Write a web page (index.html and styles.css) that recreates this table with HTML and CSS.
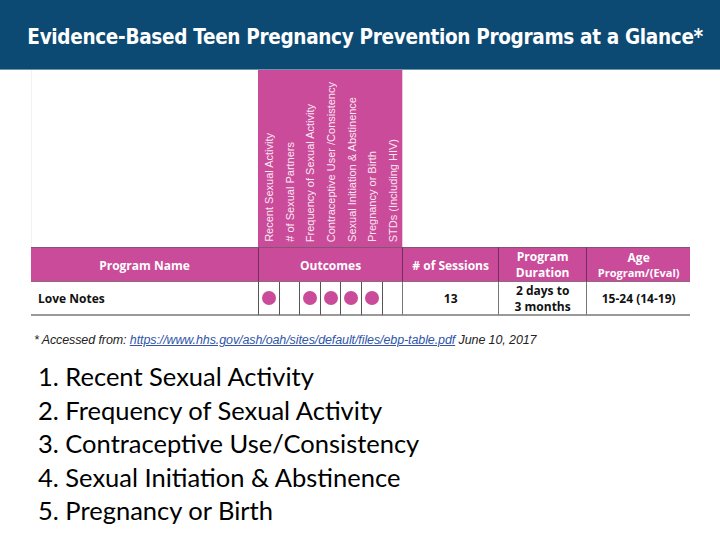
FILE: index.html
```html
<!DOCTYPE html>
<html lang="en">
<head>
<meta charset="utf-8">
<title>Evidence-Based Teen Pregnancy Prevention Programs at a Glance</title>
<link rel="stylesheet" href="styles.css">
</head>
<body>
<header class="banner">
  <h1 class="title">Evidence-Based Teen Pregnancy Prevention Programs at a Glance*</h1>
</header>
<main class="content">
  <div class="ebp">
    <div class="blank-left"></div>
    <div class="vlab"><span>Recent Sexual Activity</span></div>
    <div class="vlab"><span># of Sexual Partners</span></div>
    <div class="vlab"><span>Frequency of Sexual Activity</span></div>
    <div class="vlab"><span>Contraceptive User /Consistency</span></div>
    <div class="vlab"><span>Sexual Initiation &amp; Abstinence</span></div>
    <div class="vlab"><span>Pregnancy or Birth</span></div>
    <div class="vlab"><span>STDs (Including HIV)</span></div>
    <div class="blank-right"></div>

    <div class="th th-first">Program Name</div>
    <div class="th th-outcomes">Outcomes</div>
    <div class="th"># of Sessions</div>
    <div class="th th-two">Program<br>Duration</div>
    <div class="th th-two th-age"><span>Age</span><small>Program/(Eval)</small></div>

    <div class="td td-first">Love Notes</div>
    <div class="td dot"><i></i></div>
    <div class="td dot"></div>
    <div class="td dot"><i></i></div>
    <div class="td dot"><i></i></div>
    <div class="td dot"><i></i></div>
    <div class="td dot"><i></i></div>
    <div class="td dot"></div>
    <div class="td td-c">13</div>
    <div class="td td-c td-two">2 days to<br>3 months</div>
    <div class="td td-c">15-24 (14-19)</div>
  </div>

  <p class="note">* Accessed from: <a href="#">https://www.hhs.gov/ash/oah/sites/default/files/ebp-table.pdf</a> June 10, 2017</p>

  <ol class="list">
    <li>Recent Sexual Activity</li>
    <li>Frequency of Sexual Activity</li>
    <li>Contraceptive Use/Consistency</li>
    <li>Sexual Initiation &amp; Abstinence</li>
    <li>Pregnancy or Birth</li>
  </ol>
</main>
</body>
</html>
```
FILE: styles.css
```css
html, body {
  margin: 0;
  padding: 0;
  background: #ffffff;
}
body {
  width: 720px;
  height: 540px;
  overflow: hidden;
  font-family: "Open Sans", "Liberation Sans", sans-serif;
  color: #111;
}
.banner {
  height: 70px;
  background: #0c4a74;
  border-bottom: 1px solid #6d93ad;
  box-sizing: border-box;
  display: flex;
  align-items: center;
  justify-content: center;
  overflow: hidden;
}
.title {
  flex: none;
  margin: 4px 0 0 10px;
  color: #ffffff;
  font-family: "DejaVu Sans", sans-serif;
  font-weight: 700;
  font-size: 22px;
  letter-spacing: -0.4px;
  white-space: nowrap;
  transform: scaleX(0.84);
}
.content {
  padding-left: 31px;
}
.ebp {
  display: grid;
  width: 659px;
  grid-template-columns: 227px repeat(7, 20.6px) 96px 88px 104px;
  grid-template-rows: 177px 35px 34px;
}
.blank-left {
  border-left: 1px solid #f2f2f2;
}
.blank-right {
  grid-column: span 3;
  border-left: 1px solid #f0c9df;
}
.vlab {
  background: #ca4b9a;
  display: flex;
  justify-content: center;
  align-items: flex-end;
  padding: 0 0 5px 2px;
  box-sizing: border-box;
}
.vlab span {
  writing-mode: vertical-rl;
  transform: rotate(180deg);
  font-family: "Liberation Sans", sans-serif;
  font-size: 11px;
  line-height: 12px;
  color: #fbe6f1;
  white-space: nowrap;
}
.th {
  background: #ca4b9a;
  color: #ffffff;
  font-weight: 700;
  font-size: 12px;
  line-height: 15px;
  display: flex;
  align-items: center;
  justify-content: center;
  text-align: center;
  border-top: 1px solid #7d5870;
  border-left: 1px solid #6e2f5a;
  border-bottom: 1px solid #8d6a80;
  box-sizing: border-box;
  padding-top: 1px;
}
.th-first {
  border-left: none;
}
.th-outcomes {
  grid-column: span 7;
}
.th-two {
  flex-direction: column;
  line-height: 16px;
}
.th-age small {
  font-size: 11px;
  line-height: 14px;
}
.td {
  font-weight: 700;
  font-size: 12px;
  line-height: 15px;
  display: flex;
  align-items: center;
  border-left: 1px solid #555;
  border-bottom: 2px solid #9a9a9a;
  box-sizing: border-box;
}
.td-first {
  border-left: none;
  padding-left: 7px;
}
.td-c {
  justify-content: center;
  text-align: center;
  border-left-color: #777;
}
.td-two {
  line-height: 16px;
  padding-top: 1px;
}
.dot {
  justify-content: center;
}
.dot i {
  display: block;
  width: 14px;
  height: 14px;
  border-radius: 50%;
  background: #ca4b9a;
}
.note {
  margin: 17px 0 0 3px;
  font-family: "Liberation Sans", sans-serif;
  font-style: italic;
  font-size: 12.5px;
  letter-spacing: -0.1px;
  color: #222;
}
.note a {
  color: #2f55a8;
  text-decoration: underline;
}
.list {
  margin: 13px 0 0 0;
  padding: 0 0 0 7px;
  list-style: decimal inside;
  font-family: "Lato", "Open Sans", sans-serif;
  font-size: 25.5px;
  line-height: 33.5px;
  color: #000;
}
```
